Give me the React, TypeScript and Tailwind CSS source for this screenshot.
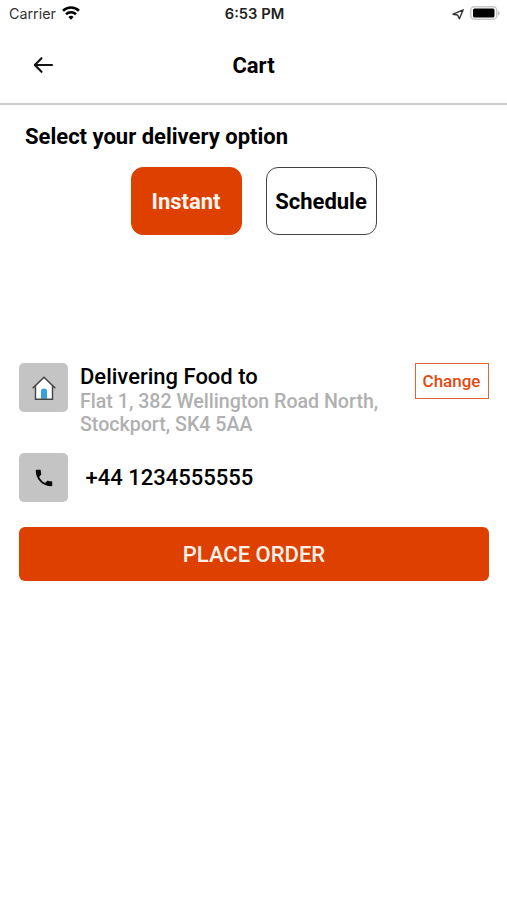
import { useState } from 'react';

type DeliveryOption = 'instant' | 'schedule';

function StatusBar() {
  return (
    <div className="grid h-7 grid-cols-3 items-center pl-[9px] pr-[7px] font-[Inter,sans-serif] text-[14.3px] leading-7">
      <div className="flex items-center gap-[6px] text-[#333333]">
        <span>Carrier</span>
        <svg width="18" height="14" viewBox="0 0 18 14" fill="none" stroke="#000" strokeWidth="2.6" className="-mt-[2px]">
          <path d="M1 4.8a11.4 11.4 0 0 1 16 0" />
          <path d="M4 8.2a7.2 7.2 0 0 1 10 0" />
          <path d="M9 13.8 6.4 11a3.9 3.9 0 0 1 5.2 0Z" fill="#000" stroke="none" />
        </svg>
      </div>
      <div className="text-center text-[14.7px] font-semibold text-[#222222]">6:53 PM</div>
      <div className="flex items-center justify-end gap-[6px]">
        <svg width="12" height="12" viewBox="0 0 12 12" fill="none" stroke="#333" strokeWidth="1.4" strokeLinejoin="round" className="-mt-px">
          <path d="M11.2 1.8 1 6.2l4.6.8 1.8 3.8Z" />
        </svg>
        <svg width="30" height="14" viewBox="0 0 30 14" className="-mt-[2px]">
          <rect x="0.75" y="0.75" width="26" height="12.5" rx="3.6" fill="#fff" stroke="#c8c8c8" strokeWidth="1.5" />
          <rect x="3" y="2.5" width="21.5" height="9" rx="1.5" fill="#000" />
          <path d="M28 5v4.4q1.7-.8 1.7-2.2T28 5Z" fill="#bbb" />
        </svg>
      </div>
    </div>
  );
}

function HomeIcon() {
  return (
    <svg width="24" height="24" viewBox="0 0 24 24">
      <path d="M3.5 11v12.2h17V11L12 2.2Z" fill="#fff" />
      <path d="M9 22.8v-7.5q0-2.8 3-2.8t3 2.8v7.5Z" fill="#35a2dc" />
      <path d="M.6 12.2 12 1.2l11.4 11M3.5 10v13.2h17V10" fill="none" stroke="#444" strokeWidth="1.4" />
    </svg>
  );
}

function PhoneIcon() {
  return (
    <svg width="22" height="22" viewBox="0 0 24 24" fill="#0a0a0a">
      <path d="M6.62 10.79c1.44 2.83 3.76 5.14 6.59 6.59l2.2-2.2c.27-.27.67-.36 1.02-.24 1.12.37 2.33.57 3.57.57.55 0 1 .45 1 1V20c0 .55-.45 1-1 1-9.39 0-17-7.61-17-17 0-.55.45-1 1-1h3.5c.55 0 1 .45 1 1 0 1.25.2 2.45.57 3.57.11.35.03.74-.25 1.02l-2.2 2.2z" />
    </svg>
  );
}

export default function CartPage() {
  const [option, setOption] = useState<DeliveryOption>('instant');

  const optionStyle = (value: DeliveryOption) =>
    option === value
      ? 'border-[#de4000] bg-[#de4000] text-[#fff4ee]'
      : 'border-[#444444] bg-white text-black';

  return (
    <div className="min-h-screen bg-white font-[Roboto,sans-serif] text-black">
      <StatusBar />

      {/* Header */}
      <header className="grid h-[77px] grid-cols-3 items-center border-b-2 border-[#cccccc] px-[33px]">
        <button aria-label="Back" className="-mt-[2px] w-5">
          <svg width="21" height="18" viewBox="0 0 21 18" fill="none" stroke="#111" strokeWidth="2.1" strokeLinecap="round" strokeLinejoin="round">
            <path d="M19 9H2M8.5 2.2 1.8 9l6.7 6.8" />
          </svg>
        </button>
        <h1 className="text-center text-[22px] font-bold leading-7">Cart</h1>
      </header>

      {/* Delivery option */}
      <section className="pt-[18px]">
        <h2 className="pl-[25px] text-[22px] font-bold leading-7">Select your delivery option</h2>
        <div className="mt-4 flex justify-center gap-6">
          <button
            onClick={() => setOption('instant')}
            className={`h-[68px] w-[111px] rounded-xl border text-[22px] font-bold ${optionStyle('instant')}`}
          >
            Instant
          </button>
          <button
            onClick={() => setOption('schedule')}
            className={`h-[68px] w-[111px] rounded-xl border text-[22px] font-bold ${optionStyle('schedule')}`}
          >
            Schedule
          </button>
        </div>
      </section>

      {/* Address and phone */}
      <section className="mt-32 pl-[19px] pr-[18px]">
        <div className="flex items-start">
          <div className="flex size-[49px] items-center justify-center rounded-[5px] bg-[#c4c4c4]">
            <HomeIcon />
          </div>
          <div className="ml-3 flex-1 pt-px">
            <h3 className="text-[22px] font-medium leading-[26px]">Delivering Food to</h3>
            <p className="text-[19.6px] font-medium leading-[23px] text-[#b0b0b0]">
              Flat 1, 382 Wellington Road North,
              <br />
              Stockport, SK4 5AA
            </p>
          </div>
          <button className="h-9 w-[74px] border-[1.5px] border-[#e0653a] pr-px pt-px text-[17px] font-medium text-[#df4a12]">
            Change
          </button>
        </div>

        <div className="mt-[17px] flex items-center">
          <div className="flex size-[49px] items-center justify-center rounded-[5px] bg-[#c4c4c4]">
            <PhoneIcon />
          </div>
          <span className="ml-[17.5px] text-[22px] font-medium">+44 1234555555</span>
        </div>

        <button className="mt-[25px] h-[54px] w-full rounded-[6px] bg-[#de4000] text-[22px] font-medium text-[#fff0e8]">
          PLACE ORDER
        </button>
      </section>
    </div>
  );
}
